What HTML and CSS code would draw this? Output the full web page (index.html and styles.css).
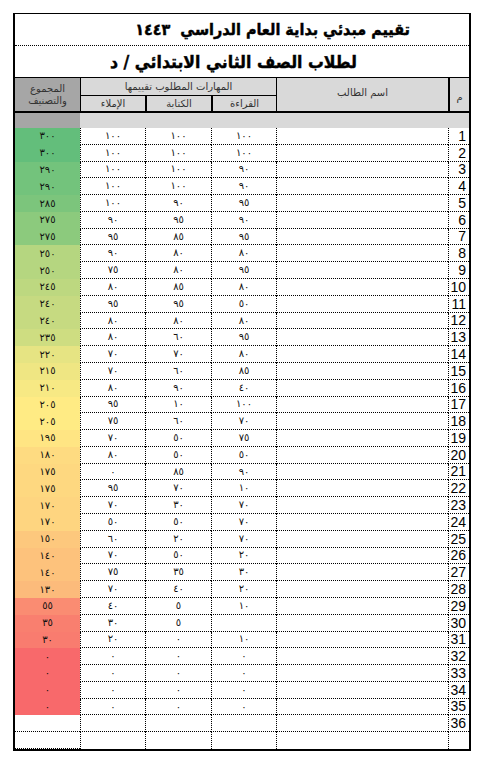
FILE: index.html
```html
<!DOCTYPE html>
<html lang="ar">
<head>
<meta charset="utf-8">
<title>تقييم مبدئي</title>
<link rel="stylesheet" href="styles.css">
</head>
<body>
<div class="sheet" dir="rtl">
  <div class="title">
    <div class="title-line t1">تقييم مبدئي بداية العام الدراسي&nbsp; ١٤٤٣</div>
    <div class="title-line t2">لطلاب الصف الثاني الابتدائي / د</div>
  </div>
  <div class="head">
    <div class="hc h-num">م</div>
    <div class="hc h-name">اسم الطالب</div>
    <div class="hc h-skills">المهارات المطلوب تقييمها</div>
    <div class="hc h-sub h-read">القراءة</div>
    <div class="hc h-sub h-write">الكتابة</div>
    <div class="hc h-sub h-dict">الإملاء</div>
    <div class="hc h-total">المجموع<br>والتصنيف</div>
  </div>
  <div class="spacer"><span class="sp-total"></span></div>
  <div class="rows">
    <div class="row"><span class="c num">1</span><span class="c name"></span><span class="c">١٠٠</span><span class="c">١٠٠</span><span class="c">١٠٠</span><span class="c total" style="background:#63BE7B">٣٠٠</span></div>
    <div class="row"><span class="c num">2</span><span class="c name"></span><span class="c">١٠٠</span><span class="c">١٠٠</span><span class="c">١٠٠</span><span class="c total" style="background:#63BE7B">٣٠٠</span></div>
    <div class="row"><span class="c num">3</span><span class="c name"></span><span class="c">٩٠</span><span class="c">١٠٠</span><span class="c">١٠٠</span><span class="c total" style="background:#73C37C">٢٩٠</span></div>
    <div class="row"><span class="c num">4</span><span class="c name"></span><span class="c">٩٠</span><span class="c">١٠٠</span><span class="c">١٠٠</span><span class="c total" style="background:#73C37C">٢٩٠</span></div>
    <div class="row"><span class="c num">5</span><span class="c name"></span><span class="c">٩٥</span><span class="c">٩٠</span><span class="c">١٠٠</span><span class="c total" style="background:#7CC57C">٢٨٥</span></div>
    <div class="row"><span class="c num">6</span><span class="c name"></span><span class="c">٩٠</span><span class="c">٩٥</span><span class="c">٩٠</span><span class="c total" style="background:#8CCA7D">٢٧٥</span></div>
    <div class="row"><span class="c num">7</span><span class="c name"></span><span class="c">٩٥</span><span class="c">٨٥</span><span class="c">٩٥</span><span class="c total" style="background:#8CCA7D">٢٧٥</span></div>
    <div class="row"><span class="c num">8</span><span class="c name"></span><span class="c">٨٠</span><span class="c">٨٠</span><span class="c">٩٠</span><span class="c total" style="background:#B5D680">٢٥٠</span></div>
    <div class="row"><span class="c num">9</span><span class="c name"></span><span class="c">٩٥</span><span class="c">٨٠</span><span class="c">٧٥</span><span class="c total" style="background:#B5D680">٢٥٠</span></div>
    <div class="row"><span class="c num">10</span><span class="c name"></span><span class="c">٨٠</span><span class="c">٨٥</span><span class="c">٨٠</span><span class="c total" style="background:#BDD880">٢٤٥</span></div>
    <div class="row"><span class="c num">11</span><span class="c name"></span><span class="c">٥٠</span><span class="c">٩٥</span><span class="c">٩٥</span><span class="c total" style="background:#C6DA81">٢٤٠</span></div>
    <div class="row"><span class="c num">12</span><span class="c name"></span><span class="c">٨٠</span><span class="c">٨٠</span><span class="c">٨٠</span><span class="c total" style="background:#C6DA81">٢٤٠</span></div>
    <div class="row"><span class="c num">13</span><span class="c name"></span><span class="c">٩٥</span><span class="c">٦٠</span><span class="c">٨٠</span><span class="c total" style="background:#CEDD81">٢٣٥</span></div>
    <div class="row"><span class="c num">14</span><span class="c name"></span><span class="c">٨٠</span><span class="c">٧٠</span><span class="c">٧٠</span><span class="c total" style="background:#E6E483">٢٢٠</span></div>
    <div class="row"><span class="c num">15</span><span class="c name"></span><span class="c">٨٥</span><span class="c">٦٠</span><span class="c">٧٠</span><span class="c total" style="background:#EFE683">٢١٥</span></div>
    <div class="row"><span class="c num">16</span><span class="c name"></span><span class="c">٤٠</span><span class="c">٩٠</span><span class="c">٨٠</span><span class="c total" style="background:#F7E984">٢١٠</span></div>
    <div class="row"><span class="c num">17</span><span class="c name"></span><span class="c">١٠٠</span><span class="c">١٠</span><span class="c">٩٥</span><span class="c total" style="background:#FFEB84">٢٠٥</span></div>
    <div class="row"><span class="c num">18</span><span class="c name"></span><span class="c">٧٠</span><span class="c">٦٠</span><span class="c">٧٥</span><span class="c total" style="background:#FFEB84">٢٠٥</span></div>
    <div class="row"><span class="c num">19</span><span class="c name"></span><span class="c">٧٥</span><span class="c">٥٠</span><span class="c">٧٠</span><span class="c total" style="background:#FFE583">١٩٥</span></div>
    <div class="row"><span class="c num">20</span><span class="c name"></span><span class="c">٥٠</span><span class="c">٥٠</span><span class="c">٨٠</span><span class="c total" style="background:#FEDB81">١٨٠</span></div>
    <div class="row"><span class="c num">21</span><span class="c name"></span><span class="c">٩٠</span><span class="c">٨٥</span><span class="c">٠</span><span class="c total" style="background:#FED880">١٧٥</span></div>
    <div class="row"><span class="c num">22</span><span class="c name"></span><span class="c">١٠</span><span class="c">٧٠</span><span class="c">٩٥</span><span class="c total" style="background:#FED880">١٧٥</span></div>
    <div class="row"><span class="c num">23</span><span class="c name"></span><span class="c">٧٠</span><span class="c">٣٠</span><span class="c">٧٠</span><span class="c total" style="background:#FED580">١٧٠</span></div>
    <div class="row"><span class="c num">24</span><span class="c name"></span><span class="c">٧٠</span><span class="c">٥٠</span><span class="c">٥٠</span><span class="c total" style="background:#FED580">١٧٠</span></div>
    <div class="row"><span class="c num">25</span><span class="c name"></span><span class="c">٧٠</span><span class="c">٢٠</span><span class="c">٦٠</span><span class="c total" style="background:#FDC87D">١٥٠</span></div>
    <div class="row"><span class="c num">26</span><span class="c name"></span><span class="c">٢٠</span><span class="c">٥٠</span><span class="c">٧٠</span><span class="c total" style="background:#FDC27C">١٤٠</span></div>
    <div class="row"><span class="c num">27</span><span class="c name"></span><span class="c">٣٠</span><span class="c">٣٥</span><span class="c">٧٥</span><span class="c total" style="background:#FDC27C">١٤٠</span></div>
    <div class="row"><span class="c num">28</span><span class="c name"></span><span class="c">٢٠</span><span class="c">٤٠</span><span class="c">٧٠</span><span class="c total" style="background:#FCBB7B">١٣٠</span></div>
    <div class="row"><span class="c num">29</span><span class="c name"></span><span class="c">١٠</span><span class="c">٥</span><span class="c">٤٠</span><span class="c total" style="background:#FA8C72">٥٥</span></div>
    <div class="row"><span class="c num">30</span><span class="c name"></span><span class="c"></span><span class="c">٥</span><span class="c">٣٠</span><span class="c total" style="background:#F97F6F">٣٥</span></div>
    <div class="row"><span class="c num">31</span><span class="c name"></span><span class="c">١٠</span><span class="c">٠</span><span class="c">٢٠</span><span class="c total" style="background:#F97C6F">٣٠</span></div>
    <div class="row"><span class="c num">32</span><span class="c name"></span><span class="c">٠</span><span class="c">٠</span><span class="c">٠</span><span class="c total" style="background:#F8696B">٠</span></div>
    <div class="row"><span class="c num">33</span><span class="c name"></span><span class="c">٠</span><span class="c">٠</span><span class="c">٠</span><span class="c total" style="background:#F8696B">٠</span></div>
    <div class="row"><span class="c num">34</span><span class="c name"></span><span class="c">٠</span><span class="c">٠</span><span class="c">٠</span><span class="c total" style="background:#F8696B">٠</span></div>
    <div class="row"><span class="c num">35</span><span class="c name"></span><span class="c">٠</span><span class="c">٠</span><span class="c">٠</span><span class="c total" style="background:#F8696B">٠</span></div>
    <div class="row blank"><span class="c num">36</span><span class="c name"></span><span class="c"></span><span class="c"></span><span class="c"></span><span class="c total"></span></div>
    <div class="row blank"><span class="c num"></span><span class="c name"></span><span class="c"></span><span class="c"></span><span class="c"></span><span class="c total"></span></div>
  </div>
</div>
</body>
</html>
```

FILE: styles.css
```css
* { box-sizing: border-box; }
html, body { margin: 0; padding: 0; background: #fff; }
body { font-family: "DejaVu Sans", sans-serif; color: #111; }

.sheet {
  margin: 13px 0 0 13px;
  width: 458px;
  border-left: 2px solid #000;
  border-right: 2px solid #000;
  border-bottom: 2px solid #000;
}

.title { border-top: 1px solid #000; }
.title-line {
  display: flex;
  align-items: center;
  font-family: "DejaVu Sans Condensed", "DejaVu Sans", sans-serif;
  font-weight: bold;
  color: #000;
  white-space: nowrap;
  -webkit-text-stroke: 0.4px #000;
}
.t1 { height: 32px; border-bottom: 1px dotted #000; padding-right: 59px; font-size: 16px; }
.t2 { height: 31px; padding-right: 112px; font-size: 17.5px; }

.head {
  display: grid;
  grid-template-columns: 21px 172px 65px 66px 65px 65px;
  grid-template-rows: 18px 15px;
  border-top: 1px solid #000;
  border-bottom: 2px solid #000;
  background: #d9d9d9;
}
.hc {
  display: flex;
  align-items: center;
  justify-content: center;
  font-size: 10px;
  color: #333;
  line-height: 12px;
  text-align: center;
}
.h-num { grid-column: 1; grid-row: 1 / 3; border-left: 2px solid #000; padding-top: 6px; }
.h-name { grid-column: 2; grid-row: 1 / 3; border-left: 1px solid #000; padding-bottom: 3px; }
.h-skills { grid-column: 3 / 6; grid-row: 1; border-left: 1px solid #000; border-bottom: 1px solid #000; }
.h-sub { grid-row: 2; }
.h-read { grid-column: 3; border-left: 2px solid #000; }
.h-write { grid-column: 4; border-left: 2px solid #000; }
.h-dict { grid-column: 5; border-left: 1px solid #000; }
.h-total { grid-column: 6; grid-row: 1 / 3; background: #a6a6a6; }

.spacer {
  height: 15px;
  display: flex;
  justify-content: flex-end;
  background: #d9d9d9;
}
.sp-total { width: 65px; background: #a6a6a6; }

.rows {
  display: grid;
  grid-template-rows: repeat(37, 1fr);
  height: 621px;
}
.row {
  display: grid;
  grid-template-columns: 21px 172px 65px 66px 65px 65px;
}
.c {
  display: flex;
  align-items: center;
  justify-content: center;
  border-left: 1px dotted #000;
  border-bottom: 1px dotted #000;
  font-size: 10px;
  line-height: 1;
  color: #111;
  overflow: hidden;
}
.c.num {
  font-family: "Liberation Sans", Arial, sans-serif;
  font-size: 14px;
  justify-content: flex-start;
  align-items: flex-end;
  padding-right: 3px;
  padding-bottom: 1px;
  color: #000;
}
.c.total { border-left: none; border-bottom: none; }
.row.blank .c.total { border-bottom: 1px dotted #000; }
.row:last-child .c { border-bottom: none; }
```
